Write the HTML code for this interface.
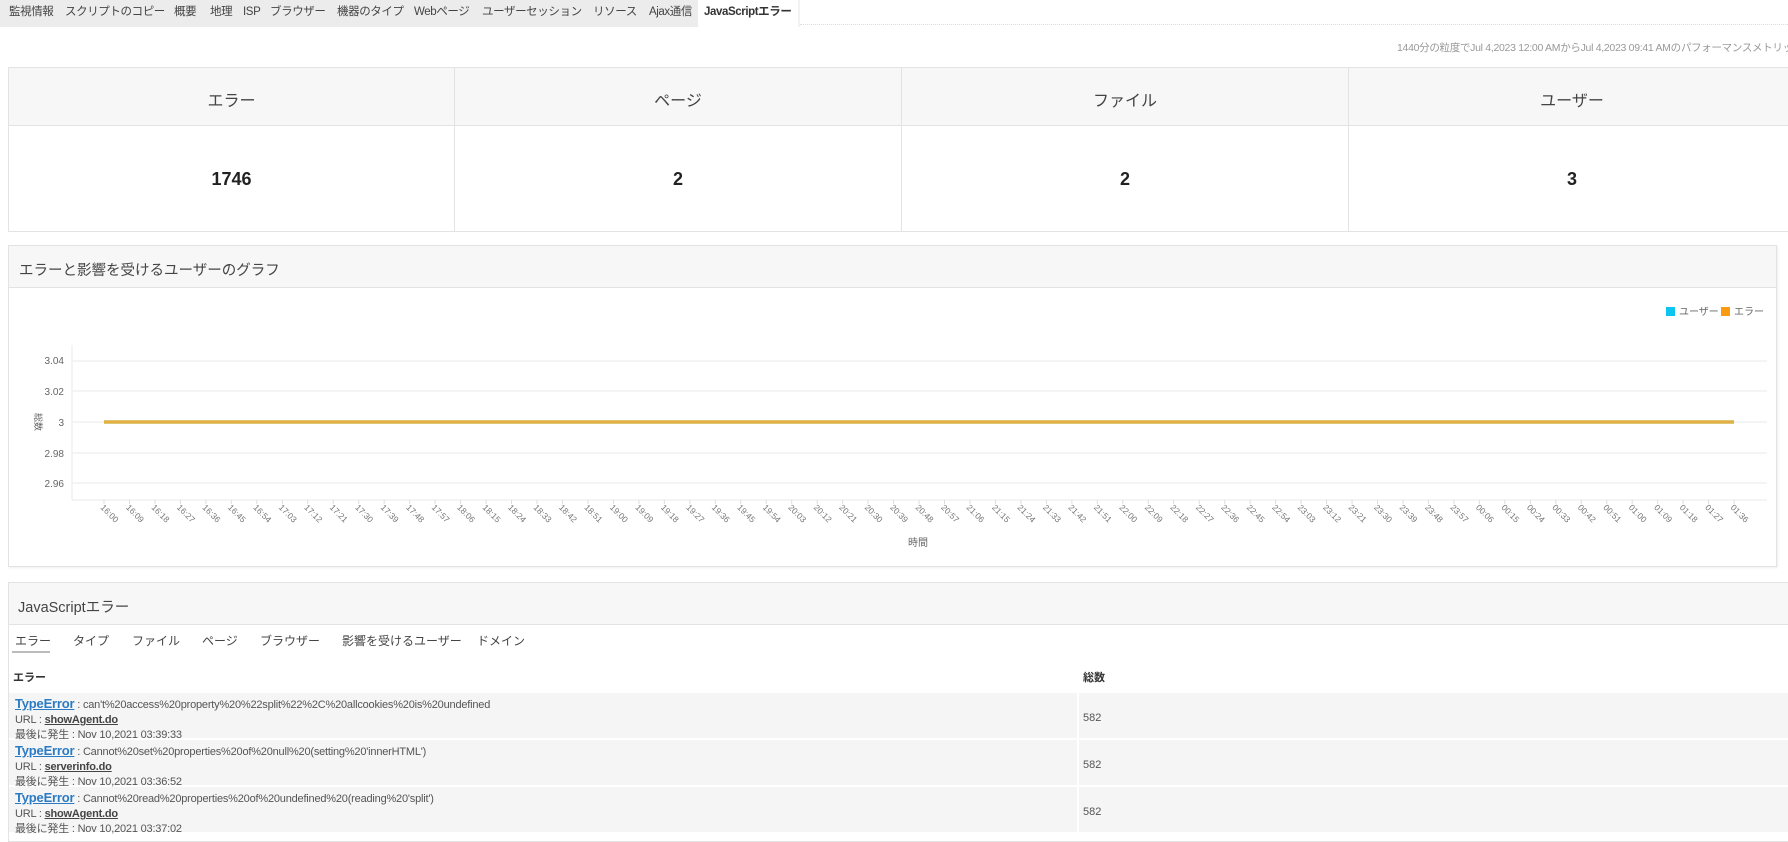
<!DOCTYPE html>
<html><head><meta charset="utf-8"><style>
*{margin:0;padding:0;box-sizing:border-box}
body{width:1788px;height:839px;overflow:hidden;background:#fff;font-family:"Liberation Sans","Noto Sans CJK JP",sans-serif;color:#444;position:relative}
.a{position:absolute;white-space:nowrap}
.tabbar{position:absolute;left:0;top:0;width:798px;height:27px;background:#ececec}
.tab{position:absolute;top:4px;font-size:11.5px;line-height:16px;color:#444;letter-spacing:-0.4px}
.box{position:absolute;border:1px solid #e3e3e3}
.hdr{background:#f7f7f7;border-bottom:1px solid #e3e3e3}
.row{position:absolute;left:9px;width:1790px;height:47px;background:#f5f5f5;border-bottom:2px solid #fff}
.l1{font-size:11px;color:#555;line-height:15px;letter-spacing:-0.2px}
.te{color:#2b7bc4;font-weight:bold;text-decoration:underline;font-size:13px}
.u{color:#444;font-weight:bold;text-decoration:underline}
</style></head><body>
<div class="tabbar"></div>
<div class="a" style="left:798px;top:0;width:2px;height:27px;background:#f2f2f2"></div>
<div class="a" style="left:800px;top:24px;width:988px;border-top:1px dotted #ddd"></div>
<div class="tab" style="left:9px">監視情報</div>
<div class="tab" style="left:65px">スクリプトのコピー</div>
<div class="tab" style="left:174px">概要</div>
<div class="tab" style="left:210px">地理</div>
<div class="tab" style="left:243px">ISP</div>
<div class="tab" style="left:270px">ブラウザー</div>
<div class="tab" style="left:337px">機器のタイプ</div>
<div class="tab" style="left:414px">Webページ</div>
<div class="tab" style="left:482px">ユーザーセッション</div>
<div class="tab" style="left:593px">リソース</div>
<div class="tab" style="left:649px">Ajax通信</div>
<div class="a" style="left:698px;top:0;width:100px;height:27px;background:#fff"></div>
<div class="tab" style="left:704px;font-weight:bold;color:#333">JavaScriptエラー</div>

<div class="a" style="left:1397px;top:40px;font-size:10.5px;color:#999;letter-spacing:-0.3px">1440分の粒度でJul 4,2023 12:00 AMからJul 4,2023 09:41 AMのパフォーマンスメトリックス</div>

<!-- stats -->
<div class="box" style="left:8px;top:67px;width:1800px;height:165px;"></div>
<div class="a hdr" style="left:9px;top:68px;width:1800px;height:58px"></div>
<div class="a" style="left:454px;top:68px;width:1px;height:163px;background:#e3e3e3"></div>
<div class="a" style="left:901px;top:68px;width:1px;height:163px;background:#e3e3e3"></div>
<div class="a" style="left:1348px;top:68px;width:1px;height:163px;background:#e3e3e3"></div>
<div class="a" style="left:9px;top:87px;width:445px;text-align:center;font-size:16px">エラー</div>
<div class="a" style="left:455px;top:87px;width:446px;text-align:center;font-size:16px">ページ</div>
<div class="a" style="left:902px;top:87px;width:446px;text-align:center;font-size:16px">ファイル</div>
<div class="a" style="left:1349px;top:87px;width:446px;text-align:center;font-size:16px">ユーザー</div>
<div class="a" style="left:9px;top:169px;width:445px;text-align:center;font-size:18px;font-weight:bold;color:#222">1746</div>
<div class="a" style="left:455px;top:169px;width:446px;text-align:center;font-size:18px;font-weight:bold;color:#222">2</div>
<div class="a" style="left:902px;top:169px;width:446px;text-align:center;font-size:18px;font-weight:bold;color:#222">2</div>
<div class="a" style="left:1349px;top:169px;width:446px;text-align:center;font-size:18px;font-weight:bold;color:#222">3</div>

<!-- chart panel -->
<div class="box" style="left:8px;top:245px;width:1769px;height:322px;box-shadow:1px 1px 2px #eee"></div>
<div class="a hdr" style="left:9px;top:246px;width:1767px;height:42px"></div>
<div class="a" style="left:19px;top:259px;font-size:14.5px;color:#444">エラーと影響を受けるユーザーのグラフ</div>
<svg class="a" style="left:0;top:0" width="1788" height="839" font-family="Liberation Sans, Noto Sans CJK JP, sans-serif">
<rect x="1666" y="307" width="9" height="9" fill="#10c4f2"/>
<text x="1679" y="315" font-size="10" fill="#666">ユーザー</text>
<rect x="1721" y="307" width="9" height="9" fill="#fb9b12"/>
<text x="1734" y="315" font-size="10" fill="#666">エラー</text>
<g stroke="#f0f0f0" stroke-width="1.5">
<line x1="72" y1="361" x2="1767" y2="361"/><line x1="72" y1="391" x2="1767" y2="391"/><line x1="72" y1="422" x2="1767" y2="422"/><line x1="72" y1="453" x2="1767" y2="453"/><line x1="72" y1="483" x2="1767" y2="483"/><line x1="72" y1="500" x2="1767" y2="500"/>
<line x1="72" y1="345" x2="72" y2="500"/>
</g>
<g font-size="10" fill="#666" text-anchor="end">
<text x="64" y="364">3.04</text><text x="64" y="395">3.02</text><text x="64" y="426">3</text><text x="64" y="457">2.98</text><text x="64" y="487">2.96</text>
</g>
<text x="0" y="0" font-size="9" fill="#666" transform="translate(35,422) rotate(90)" text-anchor="middle">総数</text>
<line x1="104" y1="422" x2="1734" y2="422" stroke="#cfe3a8" stroke-width="4"/>
<line x1="104" y1="422" x2="1734" y2="422" stroke="#e6ad42" stroke-width="3"/>
<text x="918" y="546" font-size="10" fill="#666" text-anchor="middle">時間</text>
<g id="xl" font-size="8.5" fill="#777"></g>
</svg>

<!-- JS errors panel -->
<div class="box" style="left:8px;top:582px;width:1800px;height:260px"></div>
<div class="a hdr" style="left:9px;top:583px;width:1800px;height:42px"></div>
<div class="a" style="left:18px;top:596px;font-size:14.5px;color:#444">JavaScriptエラー</div>
<div class="a" style="left:15px;top:632px;font-size:12px">エラー</div>
<div class="a" style="left:73px;top:632px;font-size:12px">タイプ</div>
<div class="a" style="left:132px;top:632px;font-size:12px">ファイル</div>
<div class="a" style="left:202px;top:632px;font-size:12px">ページ</div>
<div class="a" style="left:260px;top:632px;font-size:12px">ブラウザー</div>
<div class="a" style="left:342px;top:632px;font-size:12px">影響を受けるユーザー</div>
<div class="a" style="left:477px;top:632px;font-size:12px">ドメイン</div>
<div class="a" style="left:12px;top:651px;width:38px;height:2px;background:#bbb"></div>
<div class="a" style="left:13px;top:669px;font-size:11px;font-weight:bold;color:#333">エラー</div>
<div class="a" style="left:1083px;top:669px;font-size:11px;font-weight:bold;color:#333">総数</div>

<div class="row" style="top:693px"></div>
<div class="row" style="top:740px"></div>
<div class="row" style="top:787px"></div>
<div class="a" style="left:1077px;top:693px;width:2px;height:146px;background:#fff"></div>

<div class="a l1" style="left:15px;top:696px"><span class="te">TypeError</span> : can't%20access%20property%20%22split%22%2C%20allcookies%20is%20undefined<br>URL : <span class="u">showAgent.do</span><br>最後に発生 : Nov 10,2021 03:39:33</div>
<div class="a l1" style="left:15px;top:743px"><span class="te">TypeError</span> : Cannot%20set%20properties%20of%20null%20(setting%20'innerHTML')<br>URL : <span class="u">serverinfo.do</span><br>最後に発生 : Nov 10,2021 03:36:52</div>
<div class="a l1" style="left:15px;top:790px"><span class="te">TypeError</span> : Cannot%20read%20properties%20of%20undefined%20(reading%20'split')<br>URL : <span class="u">showAgent.do</span><br>最後に発生 : Nov 10,2021 03:37:02</div>
<div class="a" style="left:1083px;top:712px;font-size:11px;color:#555">582</div>
<div class="a" style="left:1083px;top:759px;font-size:11px;color:#555">582</div>
<div class="a" style="left:1083px;top:806px;font-size:11px;color:#555">582</div>

<script>
var t=["16:00","16:09","16:18","16:27","16:36","16:45","16:54","17:03","17:12","17:21","17:30","17:39","17:48","17:57","18:06","18:15","18:24","18:33","18:42","18:51","19:00","19:09","19:18","19:27","19:36","19:45","19:54","20:03","20:12","20:21","20:30","20:39","20:48","20:57","21:06","21:15","21:24","21:33","21:42","21:51","22:00","22:09","22:18","22:27","22:36","22:45","22:54","23:03","23:12","23:21","23:30","23:39","23:48","23:57","00:06","00:15","00:24","00:33","00:42","00:51","01:00","01:09","01:18","01:27","01:36"];
var g=document.getElementById("xl"),s="";
for(var i=0;i<t.length;i++){var x=104+i*25.47;s+='<line x1="'+x+'" y1="500" x2="'+x+'" y2="504" stroke="#ddd"/><text transform="translate('+(x-4)+',508) rotate(45)">'+t[i]+'</text>';}
g.innerHTML=s;
</script>
</body></html>
